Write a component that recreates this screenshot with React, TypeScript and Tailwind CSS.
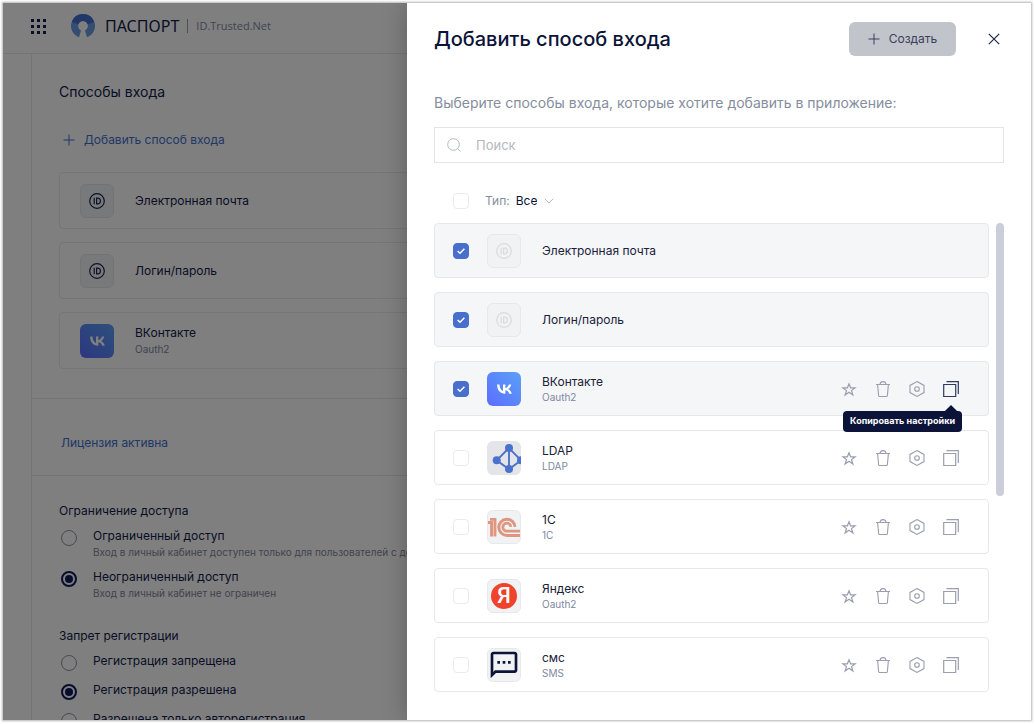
import React, { useState } from "react";
import type { ReactNode } from "react";
import { MdOutlineSms } from "react-icons/md";

function VkIcon() {
  return (
    <svg viewBox="17 30 68 42" className="h-[10px] w-[15px]" fill="currentColor" aria-hidden="true">
      <path d="M53.7 72.04C30.92 72.04 17.92 56.42 17.38 30.42h11.41c.375 19.08 8.79 27.17 15.46 28.83V30.42H55v16.46c6.58-.71 13.5-8.21 15.83-16.46h10.75c-1.79 10.17-9.29 17.67-14.63 20.75 5.33 2.5 13.88 9.04 17.13 20.87H72.25c-2.54-7.92-8.88-14.04-17.25-14.87v14.87z" />
    </svg>
  );
}

function IdIcon() {
  return (
    <svg viewBox="0 0 16 16" className="size-4" fill="none" stroke="currentColor" aria-hidden="true">
      <circle cx="8" cy="8" r="7.3" strokeWidth="1.2" />
      <path d="M5.2 4.7v6.6M7.6 5.2v5.6h1.2c1.8 0 2.6-1.1 2.6-2.8s-.8-2.8-2.6-2.8z" strokeWidth="1.2" />
    </svg>
  );
}

function LdapIcon() {
  return (
    <svg viewBox="0 0 34 34" className="size-full" fill="none" stroke="#4a72cc" aria-hidden="true">
      <path d="M22 7 9.7 19.3 22 28.3l12-9z M22 7v21" strokeWidth="1.9" />
      <g fill="#4a72cc" stroke="none">
        <circle cx="22" cy="7" r="4" />
        <circle cx="9.7" cy="19.3" r="4" />
        <circle cx="22" cy="28" r="4" />
        <circle cx="34" cy="19.3" r="4" />
      </g>
    </svg>
  );
}

function OneCIcon() {
  return (
    <svg viewBox="1 1 32 32" className="size-full" fill="none" stroke="#df957f" aria-hidden="true">
      <path d="M1 12.6h3.6v14" strokeWidth="3" />
      <path d="M3 9.4h5v17.2" strokeWidth="2.8" />
      <path d="M28 16.8a8.1 8.1 0 1 0-8.2 8.6H33" strokeWidth="3" />
      <path d="M23.8 16.8a4 4 0 1 0-4 4.4H33" strokeWidth="2.8" />
    </svg>
  );
}

function BrandIcon() {
  return (
    <svg viewBox="0 0 24 24" className="size-6" aria-hidden="true">
      <path d="M8 23.3a12 12 0 1 1 8 0l-2-6.9a4.9 4.9 0 1 0-4 0z" fill="#6b9ae3" />
      <path d="M.7 8A12 12 0 0 1 23.3 8l-6.7 2.3a4.9 4.9 0 0 0-9.2 0z" fill="#3f70cf" />
    </svg>
  );
}

function PlusIcon() {
  return (
    <svg viewBox="0 0 12 12" className="size-3" stroke="currentColor" aria-hidden="true">
      <path d="M6 .5v11M.5 6h11" strokeWidth="1" />
    </svg>
  );
}

function StarIcon() {
  return (
    <svg viewBox="0 0 16 16" className="size-4" fill="none" stroke="currentColor" aria-hidden="true">
      <path d="m8 2.8 1.6 4h4.5l-3.6 2.8 1.4 4.4L8 11.3 4.1 14l1.4-4.4L1.9 6.8h4.5z" strokeWidth="1.2" />
    </svg>
  );
}

function TrashIcon() {
  return (
    <svg viewBox="0 0 16 16" className="size-4" fill="none" stroke="currentColor" aria-hidden="true">
      <path d="M1 3.5h14M2.6 3.5l1 11q.1 1 1 1h6.8q.9 0 1-1l1-11M5 3.5Q5.3.6 8 .6t3 2.9" strokeWidth="1.1" />
    </svg>
  );
}

function HexIcon() {
  return (
    <svg viewBox="0 0 16 16" className="size-4" fill="none" stroke="currentColor" aria-hidden="true">
      <path d="m8 .6 7 3.8v7.2l-7 3.8-7-3.8V4.4z" strokeWidth="1.1" />
      <circle cx="8" cy="8" r="2.3" strokeWidth="1.1" />
    </svg>
  );
}

function CopyIcon() {
  return (
    <svg viewBox="0 0 16 16" className="size-4" fill="none" stroke="currentColor" aria-hidden="true">
      <path d="M.7 3.5h12v12H.7zM3.5.7h11.8V13" strokeWidth="1.2" />
    </svg>
  );
}

function Tile({ tone, children }: { tone: string; children: ReactNode }) {
  return (
    <span className={`flex size-[34px] shrink-0 items-center justify-center overflow-hidden rounded-md ${tone}`}>
      {children}
    </span>
  );
}

const plainTile = "border border-[#e6e8eb] bg-[#f1f2f4]";
const vkTile = "bg-linear-to-bl from-[#5aa0f6] to-[#5c6cff] text-white";

function Check({ label, defaultChecked = false }: { label: string; defaultChecked?: boolean }) {
  const [on, setOn] = useState(defaultChecked);
  return (
    <span className="grid size-4 shrink-0">
      <input
        type="checkbox"
        aria-label={label}
        checked={on}
        onChange={(e) => setOn(e.target.checked)}
        className="col-start-1 row-start-1 size-4 appearance-none rounded border border-[#e9ebed] bg-white checked:border-[#476fcb] checked:bg-[#476fcb]"
      />
      {on && (
        <svg viewBox="0 0 16 16" className="pointer-events-none col-start-1 row-start-1 size-4" fill="none" stroke="white" aria-hidden="true">
          <path d="m4.6 8 2.4 2.3 4.4-4.5" strokeWidth="1.5" />
        </svg>
      )}
    </span>
  );
}

type Provider = {
  name: string;
  kind?: string;
  checked?: boolean;
  tone: string;
  icon: ReactNode;
  tip?: boolean;
};

const providers: Provider[] = [
  { name: "Электронная почта", checked: true, tone: plainTile + " text-[#d9dbde]", icon: <IdIcon /> },
  { name: "Логин/пароль", checked: true, tone: plainTile + " text-[#d9dbde]", icon: <IdIcon /> },
  { name: "ВКонтакте", kind: "Oauth2", checked: true, tone: vkTile, icon: <VkIcon />, tip: true },
  { name: "LDAP", kind: "LDAP", tone: "bg-[#e4e5e8]", icon: <LdapIcon /> },
  { name: "1С", kind: "1C", tone: plainTile, icon: <OneCIcon /> },
  {
    name: "Яндекс",
    kind: "Oauth2",
    tone: plainTile,
    icon: (
      <span className="flex size-[26px] items-center justify-center rounded-full bg-[#f0432b] font-[Roboto,sans-serif] text-[22px] leading-none font-medium text-white">
        Я
      </span>
    ),
  },
  {
    name: "смс",
    kind: "SMS",
    tone: plainTile + " text-[#0c1338]",
    icon: <MdOutlineSms className="size-8 shrink-0" />,
  },
];

function ProviderRow({ p }: { p: Provider }) {
  return (
    <li className={`flex h-[55px] items-center rounded border border-[#e6e8eb] pr-[29px] pl-[18px] ${p.checked ? "bg-[#f4f6f8]" : "bg-white"}`}>
      <Check label={p.name} defaultChecked={p.checked} />
      <span className="ml-[18px] flex">
        <Tile tone={p.tone}>{p.icon}</Tile>
      </span>
      <span className="ml-[21px] flex flex-1 flex-col">
        <span className="text-[12px] leading-4 text-[#1b2138]">{p.name}</span>
        {p.kind && <span className="text-[10px] leading-[14px] text-[#8088a0]">{p.kind}</span>}
      </span>
      {p.kind && (
        <span className="flex gap-[18px] text-[#9a9eae]">
          <button type="button" aria-label="Избранное"><StarIcon /></button>
          <button type="button" aria-label="Удалить"><TrashIcon /></button>
          <button type="button" aria-label="Настройки"><HexIcon /></button>
          <span className="relative flex">
            <button type="button" aria-label="Копировать настройки" className={p.tip ? "text-[#2f3a5f]" : ""}>
              <CopyIcon />
            </button>
            {p.tip && (
              <span role="tooltip" className="absolute top-[30px] -right-[3px] z-10 flex h-[21px] items-center rounded bg-[#0c1338] px-[7px] text-[9px] font-bold whitespace-nowrap text-white">
                <span className="absolute -top-1 right-[6px] size-[10px] rotate-45 bg-[#0c1338]" />
                <span className="relative">Копировать настройки</span>
              </span>
            )}
          </span>
        </span>
      )}
    </li>
  );
}

function MethodCard({ name, kind, tone, icon }: { name: string; kind?: string; tone: string; icon: ReactNode }) {
  return (
    <li className="flex h-[57px] items-center gap-[21px] rounded border border-[#e8eaed] px-5">
      <Tile tone={tone}>{icon}</Tile>
      <span className="flex flex-col">
        <span className="text-[12px] leading-4">{name}</span>
        {kind && <span className="text-[10px] leading-4 text-[#8088a0]">{kind}</span>}
      </span>
    </li>
  );
}

function Option({ group, title, note, defaultChecked }: { group: string; title: string; note?: string; defaultChecked?: boolean }) {
  return (
    <label className="flex items-start gap-4 pl-[2px]">
      <input
        type="radio"
        name={group}
        defaultChecked={defaultChecked}
        className="mt-0.5 grid size-4 shrink-0 appearance-none place-items-center rounded-full border border-[#8f93a5] checked:border-2 checked:border-[#10195a] checked:before:size-2 checked:before:rounded-full checked:before:bg-[#10195a]"
      />
      <span className="flex flex-col whitespace-nowrap">
        <span className="text-[12px] leading-4">{title}</span>
        {note && <span className="text-[10px] leading-4 text-[#83869a]">{note}</span>}
      </span>
    </label>
  );
}

function Page() {
  const idTone = "border border-[#e4e7ea] bg-[#f1f3f5] text-[#1a2350]";
  return (
    <div className="h-full overflow-hidden text-[#121a4a]">
      <header className="flex h-[51px] items-center border-b border-[#e6e8eb] pb-1 pl-7">
        <button type="button" aria-label="Меню" className="grid grid-cols-3 gap-[3px]">
          {Array.from({ length: 9 }, (_, i) => (
            <span key={i} className="size-[3px] bg-[#121a4a]" />
          ))}
        </button>
        <span className="ml-[25px]"><BrandIcon /></span>
        <span className="ml-[10px] font-['Noto_Sans',sans-serif] text-base leading-6">ПАСПОРТ</span>
        <span className="mx-2 h-[14px] w-px bg-[#9aa0b5]" />
        <span className="font-['Open_Sans',sans-serif] text-[11px] text-[#8089a6]">ID.Trusted.Net</span>
      </header>
      <main className="ml-7 border-l border-[#e6e8eb]">
        <section className="border-b border-[#e6e8eb] px-[27px] pt-7 pb-[29px]">
          <h2 className="text-[14px] leading-5">Способы входа</h2>
          <a href="#add" className="mt-7 flex items-center gap-[9px] pl-1 text-[12px] leading-5 text-[#3f70cf]">
            <PlusIcon />
            Добавить способ входа
          </a>
          <ul className="mt-[22px] flex flex-col gap-[13px]">
            <MethodCard name="Электронная почта" tone={idTone} icon={<IdIcon />} />
            <MethodCard name="Логин/пароль" tone={idTone} icon={<IdIcon />} />
            <MethodCard name="ВКонтакте" kind="Oauth2" tone={vkTile} icon={<VkIcon />} />
          </ul>
        </section>
        <section className="border-b border-[#e6e8eb] px-[29px] pt-[34px] pb-[22px]">
          <a href="#license" className="block text-[12px] leading-5 text-[#3f70cf]">Лицензия активна</a>
        </section>
        <section className="px-[27px] pt-[25px]">
          <fieldset>
            <legend className="text-[12px] leading-5">Ограничение доступа</legend>
            <div className="mt-[7px] flex flex-col gap-[9px]">
              <Option group="access" title="Ограниченный доступ" note="Вход в личный кабинет доступен только для пользователей с доступом" />
              <Option group="access" title="Неограниченный доступ" note="Вход в личный кабинет не ограничен" defaultChecked />
            </div>
          </fieldset>
          <fieldset className="mt-[25px]">
            <legend className="text-[12px] leading-5">Запрет регистрации</legend>
            <div className="mt-[7px] flex flex-col gap-[11px]">
              <Option group="signup" title="Регистрация запрещена" />
              <Option group="signup" title="Регистрация разрешена" defaultChecked />
              <Option group="signup" title="Разрешена только авторегистрация" />
            </div>
          </fieldset>
        </section>
      </main>
    </div>
  );
}

function Drawer() {
  return (
    <aside
      role="dialog"
      aria-label="Добавить способ входа"
      className="absolute inset-y-0 right-0 w-[624px] max-w-full bg-white pr-[27px] pl-[27px] shadow-[0_0_24px_rgba(0,0,0,0.25)]"
    >
      <header className="flex items-center pt-[19px]">
        <h1 className="flex-1 text-xl leading-7 font-medium text-[#0c1338]">Добавить способ входа</h1>
        <button type="button" className="flex h-[34px] w-[107px] items-center justify-center gap-[9px] rounded-md bg-[#c1c4cb] text-[12px] text-[#39415a]">
          <PlusIcon />
          Создать
        </button>
        <button type="button" aria-label="Закрыть" className="ml-7 flex size-5 items-center justify-center text-[#1f2747]">
          <svg viewBox="0 0 12 12" className="size-3" stroke="currentColor" aria-hidden="true">
            <path d="m.8.8 10.4 10.4M11.2.8.8 11.2" strokeWidth="1.2" />
          </svg>
        </button>
      </header>
      <p className="mt-[37px] text-[14px] leading-5 text-[#868d9e]">
        Выберите способы входа, которые хотите добавить в приложение:
      </p>
      <label className="mt-[14px] flex h-9 items-center gap-[14px] border border-[#e3e5e8] px-[11px] text-[#b3b7c0]">
        <svg viewBox="0 0 16 16" className="size-4 shrink-0" fill="none" stroke="currentColor" aria-hidden="true">
          <circle cx="7.5" cy="7.5" r="5.8" />
          <path d="m11.6 11.6 3 3" />
        </svg>
        <input type="search" aria-label="Поиск" placeholder="Поиск" className="w-full text-[13px] leading-5 text-[#1b2138] outline-none placeholder:text-[#b3b7c0]" />
      </label>
      <div className="mt-7 flex h-5 items-center pl-[19px]">
        <Check label="Выбрать все" />
        <label className="ml-4 flex items-center text-[12px] leading-5 text-[#868d9e]">
          Тип:
          <select className="ml-[6px] field-sizing-content appearance-none text-[#0c1338]">
            <option>Все</option>
          </select>
          <svg viewBox="0 0 10 6" className="ml-[7px] h-1.5 w-2.5" fill="none" stroke="#b3b7c0" aria-hidden="true">
            <path d="m.8.8 4.2 4.2L9.2.8" />
          </svg>
        </label>
      </div>
      <div className="mt-3 flex gap-[7px]">
        <ul className="flex flex-1 flex-col gap-[14px]">
          {providers.map((p) => (
            <ProviderRow key={p.name} p={p} />
          ))}
        </ul>
        <div className="h-[273px] w-2 rounded-full bg-[#cbced8]" />
      </div>
    </aside>
  );
}

export default function App() {
  return (
    <div className="h-screen bg-white pt-[3px] pr-1 pb-1 pl-[3px] font-[Inter,'Noto_Sans',sans-serif]">
      <div className="relative h-full overflow-hidden shadow-[0_0_2px_1px_rgba(0,0,0,0.3)]">
        <Page />
        <div className="absolute inset-0 bg-black/50" />
        <Drawer />
      </div>
    </div>
  );
}
